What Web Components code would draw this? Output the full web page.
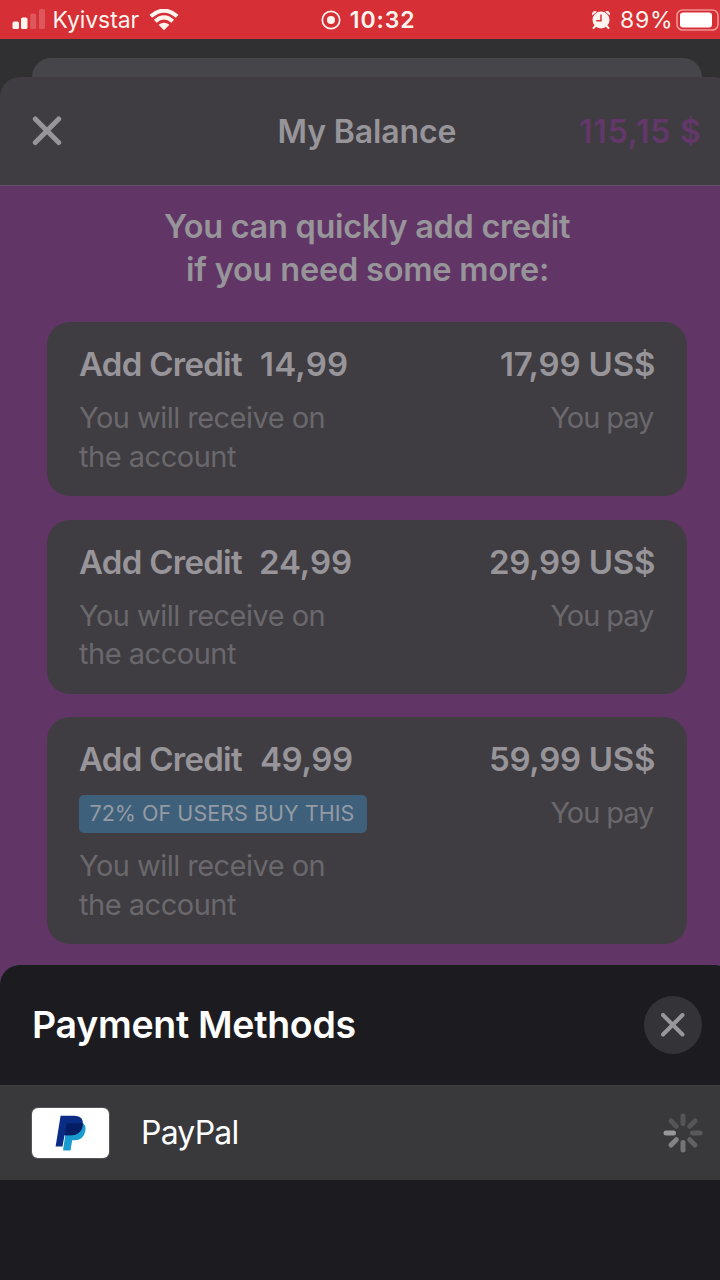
<!DOCTYPE html>
<html lang="en">
<head>
<meta charset="utf-8">
<title>My Balance</title>
<style>
html,body{margin:0;height:100%;background:#302f32}
body{font-family:Inter,"Liberation Sans",sans-serif;overflow:hidden}
</style>
</head>
<body>
<balance-app></balance-app>
<script>
const define = (name, html, init) => customElements.define(name, class extends HTMLElement {
  connectedCallback() {
    if (this.shadowRoot) return;
    const t = document.createElement('template');
    t.innerHTML = typeof html === 'function' ? html(this) : html;
    this.attachShadow({mode: 'open'}).append(t.content.cloneNode(true));
    if (init) init(this);
  }
});

// One line of text whose tracking is adjusted so its glyphs span exactly "w" pixels.
const ctx = document.createElement('canvas').getContext('2d');
define('fit-text', el => `<style>
  :host{display:block;flex:none;width:${el.getAttribute('w')}px;white-space:pre;font-size:${el.getAttribute('size')}px;font-weight:${el.getAttribute('weight') || 400}}
</style><slot></slot>`, el => {
  const s = el.textContent;
  ctx.font = `${el.getAttribute('weight') || 400} ${el.getAttribute('size')}px Inter, "Liberation Sans", sans-serif`;
  const m = ctx.measureText(s);
  const ink = m.actualBoundingBoxLeft + m.actualBoundingBoxRight;
  el.style.letterSpacing = ((el.getAttribute('w') - ink) / (s.length - 1)).toFixed(3) + 'px';
  el.style.textIndent = m.actualBoundingBoxLeft.toFixed(2) + 'px';
});

define('status-bar', `<style>
  :host{display:grid;grid-template-columns:1fr auto 1fr;align-items:center;width:720px;height:38.5px;box-sizing:border-box;background:#d62f36;color:#fff4ee;line-height:40px}
  div{display:flex;align-items:center;height:39px}
  svg{display:block;flex:none}
  .l{padding-left:12px}
  .c{padding-left:14px}
  .r{justify-content:flex-end}
</style>
<div class="l">
  <svg width="34" height="22" viewBox="0 0 34 22"><g fill="#fff4ee"><rect x=".5" y="12.5" width="6.5" height="7.5" rx="1.6"/><rect x="9" y="8.5" width="6.5" height="11.500" rx="1.6"/><g opacity=".2"><rect x="18.2" y="4.5" width="6" height="15.500" rx="1.6"/><rect x="27" y="0" width="6" height="20" rx="1.6"/></g></g></svg>
  <fit-text style="margin-left:8.500px" w="85" size="23">Kyivstar</fit-text>
  <svg style="margin-left:9.500px" width="30" height="22" viewBox="0 0 30 22"><g fill="none" stroke="#fff4ee" stroke-width="4"><path d="M1.8 7.3Q15-4.1 28.2 7.3"/><path d="M6.3 12.3Q15 4.6 23.7 12.3"/></g><path fill="#fff4ee" d="M9.6 15.8Q15 11.6 20.4 15.8L15 21.2Z"/></svg>
</div>
<div class="c">
  <svg width="20" height="20" viewBox="0 0 20 20"><circle cx="10" cy="10" r="8.7" fill="none" stroke="#fff4ee" stroke-width="1.7"/><circle cx="10" cy="10" r="4" fill="#fff4ee"/></svg>
  <fit-text style="margin-left:10px" w="62.500" size="23" weight="580">10:32</fit-text>
</div>
<div class="r">
  <svg width="20" height="20" viewBox="0 0 20 20"><path d="M4.5 16l-2 2M15.500 16l2 2" stroke="#fff4ee" stroke-width="2" stroke-linecap="round"/><path d="M1.300 5.600Q.3 3 2 1.700T6 1.600ZM18.700 5.600Q19.700 3 18 1.700T14 1.600Z" fill="#fff4ee"/><circle cx="10" cy="10" r="8.500" fill="#fff4ee"/><path d="M10 4.500V10.700H5.300" fill="none" stroke="#d62f36" stroke-width="1.500"/></svg>
  <fit-text style="margin-left:10px" w="49" size="23">89%</fit-text>
  <svg style="margin-left:6px" width="44" height="22" viewBox="0 0 44 22"><rect x="1" y="1" width="41" height="20" rx="5.500" fill="none" stroke="#f09393" stroke-width="1.600"/><rect x="4" y="3.500" width="32" height="15" rx="3" fill="#fff"/></svg>
</div>`);

define('sheet-header', `<style>
  :host{display:grid;grid-template-columns:1fr auto 1fr;align-items:center;height:108px;box-sizing:border-box;padding:1px 34px 0 32px;background:#3f3d41;border-radius:20px 20px 0 0;color:#97959a;line-height:44px}
  svg{display:block;margin-top:-1px}
  .t{padding-left:3px}.p{justify-self:end;color:#63376a}
</style>
<svg width="30" height="30" viewBox="0 0 30 30"><path d="M3.300 3L26.700 26.500M26.700 3L3.300 26.500" stroke="#97959a" stroke-width="5" stroke-linecap="round"/></svg>
<fit-text class="t" w="176" size="32" weight="580">My Balance</fit-text>
<fit-text class="p" w="120" size="32" weight="560">115,15 $</fit-text>`);

define('tag-badge', `<style>
  :host{display:flex;align-items:center;box-sizing:border-box;width:288.500px;height:37.500px;margin:15px 0 14.500px -.5px;padding-left:12px;border-radius:5px;background:#3f607b;color:#949ba4;line-height:37.500px}
</style><slot></slot>`);

define('credit-card', el => `<style>
  :host{display:flex;justify-content:space-between;box-sizing:border-box;width:640px;padding:22px 33px 20px 32px;border-radius:23px;background:#3f3d41;color:#97959a}
  .h{display:flex;gap:18px;line-height:41px;margin-bottom:14px}
  .h.b{margin-bottom:0}
  .r{display:flex;flex-direction:column;align-items:flex-end}
  .s{color:#6a686d;line-height:38.500px}
</style>
<div><div class="h${el.children.length ? ' b' : ''}"><fit-text w="164" size="33" weight="580">Add Credit</fit-text><fit-text w="${el.getAttribute('cw')}" size="33" weight="580">${el.getAttribute('credit')}</fit-text></div>
<slot></slot>
<fit-text class="s" w="244.500" size="29">You will receive on</fit-text>
<fit-text class="s" w="157" size="29">the account</fit-text></div>
<div class="r"><div class="h"><fit-text w="${el.getAttribute('pw')}" size="33" weight="580">${el.getAttribute('price')}</fit-text></div>
<fit-text class="s" w="103.500" size="29">You pay</fit-text></div>`);

define('credit-list', `<style>
  :host{display:flex;flex-direction:column;align-items:center;box-sizing:border-box;height:800px;background:#613666;border-top:1px solid #655070;color:#97959a}
  .h{display:flex;flex-direction:column;align-items:center;line-height:42.500px;padding-top:20px;margin-bottom:31px}
  .c{display:flex;flex-direction:column;gap:23.500px}
</style>
<div class="h"><fit-text w="406" size="32.500" weight="580">You can quickly add credit</fit-text><fit-text w="360" size="32.500" weight="580">if you need some more:</fit-text></div>
<div class="c"><slot></slot></div>`);

define('payment-row', `<style>
  :host{display:flex;align-items:center;box-sizing:border-box;height:94.500px;padding:0 31px 0 31.500px;background:#39383b;border-top:1px solid #414044;color:#fff;line-height:39px}
  .logo{display:grid;place-items:center;width:77.500px;height:49.500px;border-radius:6px;background:#fff;box-shadow:0 0 0 1px #55545a}
  .n{margin-left:34px;margin-right:auto}
  svg{display:block}
</style>
<span class="logo"><svg width="31" height="36" viewBox="0 0 31 36"><path fill="#199bd0" d="M12 8H28Q31.500 11 30.200 16.500Q28.400 25.300 19.500 25.300H17.200L15.500 35.500H8Z"/><path fill="#0b2c85" d="M5.600.7H19.500Q29.200.9 27.700 10.200Q26.100 20 16 20.200H9.500L7.500 31.500H.6Z"/><path fill="#051d63" d="M11.800 8.300H27.900Q28 18.600 17.500 20.200H9.800Z"/></svg></span>
<fit-text class="n" w="94.500" size="32">PayPal</fit-text>
<svg width="40" height="40" viewBox="-20 -20 40 40" stroke-width="5" stroke-linecap="round"><path d="M-9.500 0H-17" stroke="#98979b"/><path d="M-6.700 6.700L-12 12" stroke="#838286"/><path d="M0 9.500V17" stroke="#747377"/><path d="M6.700 6.700L12 12" stroke="#626165"/><path d="M9.500 0H17" stroke="#59585c"/><path d="M6.700-6.700L12-12" stroke="#555458"/><path d="M0-9.500V-17" stroke="#555458"/><path d="M-6.700-6.700L-12-12" stroke="#555458"/></svg>`);

define('payment-sheet', `<style>
  :host{display:block;position:relative;height:340px;margin-top:-20px;background:#1c1b1f;border-radius:20px 20px 0 0;color:#fff}
  header{display:flex;align-items:center;justify-content:space-between;height:120px;padding:0 32px 0 34px;line-height:48px}
  .x{display:grid;place-items:center;width:58px;height:58px;border-radius:50%;background:#343337}
</style>
<header><fit-text w="321.500" size="37.500" weight="600">Payment Methods</fit-text>
<span class="x"><svg width="24" height="24" viewBox="0 0 24 24"><path d="M2 2L21.500 21.500M21.500 2L2 21.500" stroke="#98979b" stroke-width="4" stroke-linecap="round"/></svg></span></header>
<slot></slot>`);

define('balance-app', `<style>
  :host{display:block;width:720px;height:1280px;overflow:hidden;background:#302f32}
  main{width:734px}
  .rear{height:19px;margin:19.500px 32px 0;border-radius:20px 20px 0 0;background:#464549}
</style>
<status-bar></status-bar>
<main><div class="rear"></div>
<sheet-header></sheet-header>
<credit-list>
  <credit-card credit="14,99" cw="86" price="17,99 US$" pw="153"></credit-card>
  <credit-card credit="24,99" cw="90" price="29,99 US$" pw="163"></credit-card>
  <credit-card credit="49,99" cw="91" price="59,99 US$" pw="163"><tag-badge><fit-text w="263" size="21.500">72% OF USERS BUY THIS</fit-text></tag-badge></credit-card>
</credit-list>
<payment-sheet><payment-row></payment-row></payment-sheet></main>`);
</script>
</body>
</html>
